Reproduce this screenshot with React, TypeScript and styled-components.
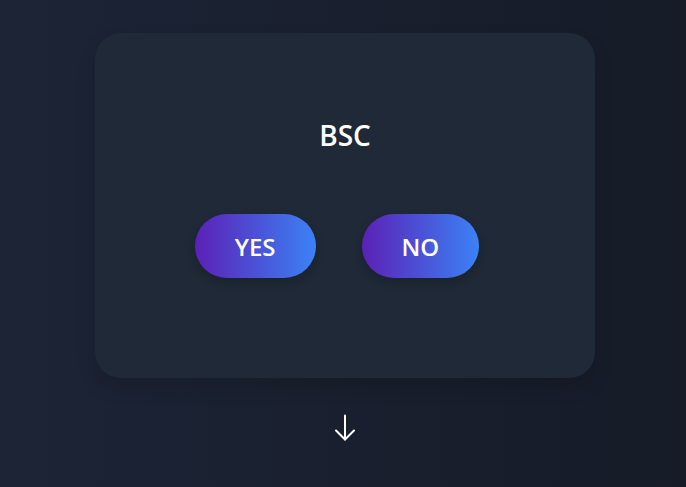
import * as React from "react";
import styled, { createGlobalStyle } from "styled-components";

const GlobalStyle = createGlobalStyle`
  html, body {
    margin: 0;
    padding: 0;
    height: 100%;
  }
  body {
    font-family: "Open Sans", "Liberation Sans", sans-serif;
    background: linear-gradient(to right, #1c2436, #161b27);
  }
`;

const Page = styled.div`
  min-height: 487px;
  display: flex;
  flex-direction: column;
  align-items: center;
  padding: 33px 0 0 4px;
  box-sizing: border-box;
`;

const Card = styled.div`
  width: 500px;
  height: 345px;
  box-sizing: border-box;
  background-color: #1f2937;
  border-radius: 26px;
  box-shadow: 0 10px 20px rgba(0, 0, 0, 0.12);
  display: flex;
  flex-direction: column;
  align-items: center;
  padding-top: 86px;
`;

const Title = styled.h2`
  margin: 0;
  font-size: 28px;
  line-height: 32px;
  font-weight: 600;
  color: #ffffff;
`;

const ButtonRow = styled.div`
  display: flex;
  justify-content: center;
  gap: 46px;
  margin-top: 63px;
  padding-right: 16px;
`;

const VoteButton = styled.button`
  border: none;
  cursor: pointer;
  height: 64px;
  padding: 0 40px;
  border-radius: 32px;
  font-family: "Open Sans", "Liberation Sans", sans-serif;
  font-size: 24px;
  font-weight: 600;
  color: #ffffff;
  background: linear-gradient(to right, #5b21b6, #3b82f6);
  box-shadow: 0 4px 10px rgba(0, 0, 0, 0.2);
`;

const ArrowWrap = styled.div`
  margin-top: 36px;
  display: flex;
`;

const DownArrow = () => (
  <svg width="22" height="27" viewBox="0 0 22 27" fill="none" stroke="#ffffff" strokeWidth="2" strokeLinecap="round" strokeLinejoin="round">
    <path d="M11 1.5V25.5" />
    <path d="M2 16.5L11 25.5L20 16.5" />
  </svg>
);

export default function App() {
  return (
    <>
      <GlobalStyle />
      <Page>
        <Card>
          <Title>BSC</Title>
          <ButtonRow>
            <VoteButton>YES</VoteButton>
            <VoteButton>NO</VoteButton>
          </ButtonRow>
        </Card>
        <ArrowWrap>
          <DownArrow />
        </ArrowWrap>
      </Page>
    </>
  );
}
